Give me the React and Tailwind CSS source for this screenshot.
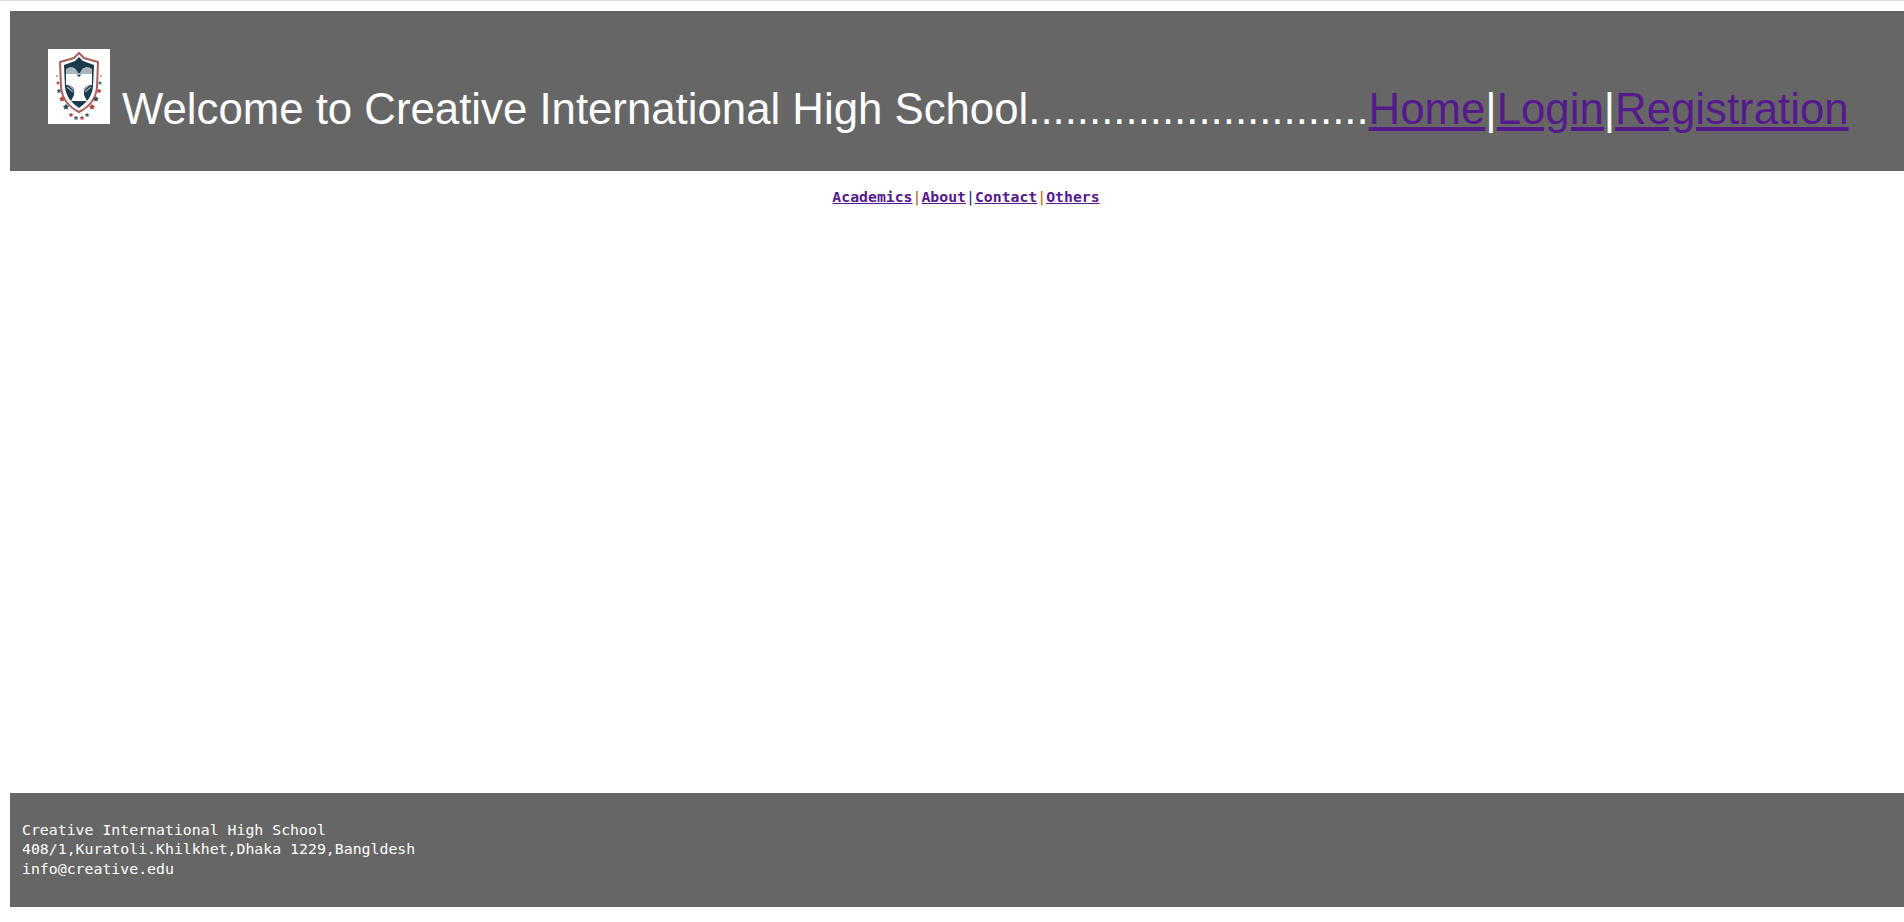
const SANS = "font-['Liberation_Sans',Arial,sans-serif]";
const MONO = "font-['DejaVu_Sans_Mono','Liberation_Mono',monospace]";

const Star = ({ x, y, r, fill }) => {
  const pts = [];
  for (let i = 0; i < 10; i++) {
    const rad = i % 2 ? r * 0.55 : r;
    const a = (Math.PI / 5) * i - Math.PI / 2;
    pts.push(`${x + rad * Math.cos(a)},${y + rad * Math.sin(a)}`);
  }
  return <polygon points={pts.join(' ')} fill={fill} />;
};

const stars = [
  [9, 27, 1.4, '#8a9aa5'], [53, 27, 1.4, '#b98a85'],
  [10, 34, 2.2, '#b5605a'], [52, 34, 2.2, '#5b7080'],
  [11, 42, 2.6, '#4a6070'], [51, 42, 2.6, '#b5423c'],
  [14, 50, 3, '#b5423c'], [48, 50, 3, '#2f4a5c'],
  [18, 58, 3.2, '#2f4a5c'], [44, 58, 3.2, '#b5423c'],
  [23, 66, 2.4, '#b5423c'], [39, 66, 2.4, '#4a6070'],
  [28, 69, 2.4, '#4a6070'], [34, 69, 2.4, '#b5423c'],
];

const Logo = () => (
  <svg className="inline-block w-[62px] h-[75px] bg-white align-baseline" viewBox="0 0 62 75" xmlns="http://www.w3.org/2000/svg">
    <g className="blur-[0.3px]">
      {/* shield */}
      <path d="M31 4 L36 9 L50 13 L49 38 C48 50 41 58 31 63 C21 58 14 50 13 38 L12 13 L26 9 Z" fill="#fff" stroke="#a8605c" strokeWidth="2" />
      <path d="M31 8 L35 12 L46 16 L45 38 C44 48 38 54 31 59 C24 54 18 48 17 38 L16 16 L27 12 Z" fill="#1c3a4d" />
      {/* wings */}
      <path d="M18 20 C23 16 28 18 30 24 L32 24 C34 18 39 16 44 20 L44 26 L18 26 Z" fill="#a9b6be" />
      <path d="M18 25 L28 25 L31 28 L34 25 L44 25 L44 36 C41 36 38 37 36 40 L36 46 L39 52 L23 52 L26 46 L26 40 C24 37 21 36 18 36 Z" fill="#fff" />
      <path d="M19 38 L25 43 M21 36 L26 41 M43 38 L37 43 M41 36 L36 41" stroke="#9fb0ba" strokeWidth="1.2" />
      {stars.map(([x, y, r, fill]) => (
        <Star key={`${x}-${y}`} x={x} y={y} r={r} fill={fill} />
      ))}
    </g>
  </svg>
);

const Link = ({ children }) => (
  <a href="#" className="text-[#551a8b] underline">{children}</a>
);

export default function App() {
  return (
    <div className="bg-white h-[922px] border-t border-[#d8d8d8] pl-[10px] pt-[10px] overflow-hidden">
      <header className={`bg-[#666666] h-[160px] pl-[38px] pt-[38px] text-white text-[43.75px] leading-[52px] whitespace-nowrap ${SANS}`}>
        <Logo />
        <span className="ml-[12px]">Welcome to Creative International High School............................</span>
        <Link>Home</Link>|<Link>Login</Link>|<Link>Registration</Link>
      </header>

      <main className={`h-[622px] pt-[16px] pl-[18px] text-center text-[14.8px] leading-[20px] font-bold ${MONO}`}>
        <Link>Academics</Link><span className="font-normal text-[#b0640f]">|</span><Link>About</Link><span className="font-normal text-[#0b2a8a]">|</span><Link>Contact</Link><span className="font-normal text-[#b0640f]">|</span><Link>Others</Link>
      </main>

      <footer className={`bg-[#666666] h-[114px] pl-[12px] pt-[28px] text-white text-[14.85px] leading-[19.3px] ${MONO}`}>
        <p>Creative International High School</p>
        <p>408/1,Kuratoli.Khilkhet,Dhaka 1229,Bangldesh</p>
        <p>info@creative.edu</p>
      </footer>
    </div>
  );
}
